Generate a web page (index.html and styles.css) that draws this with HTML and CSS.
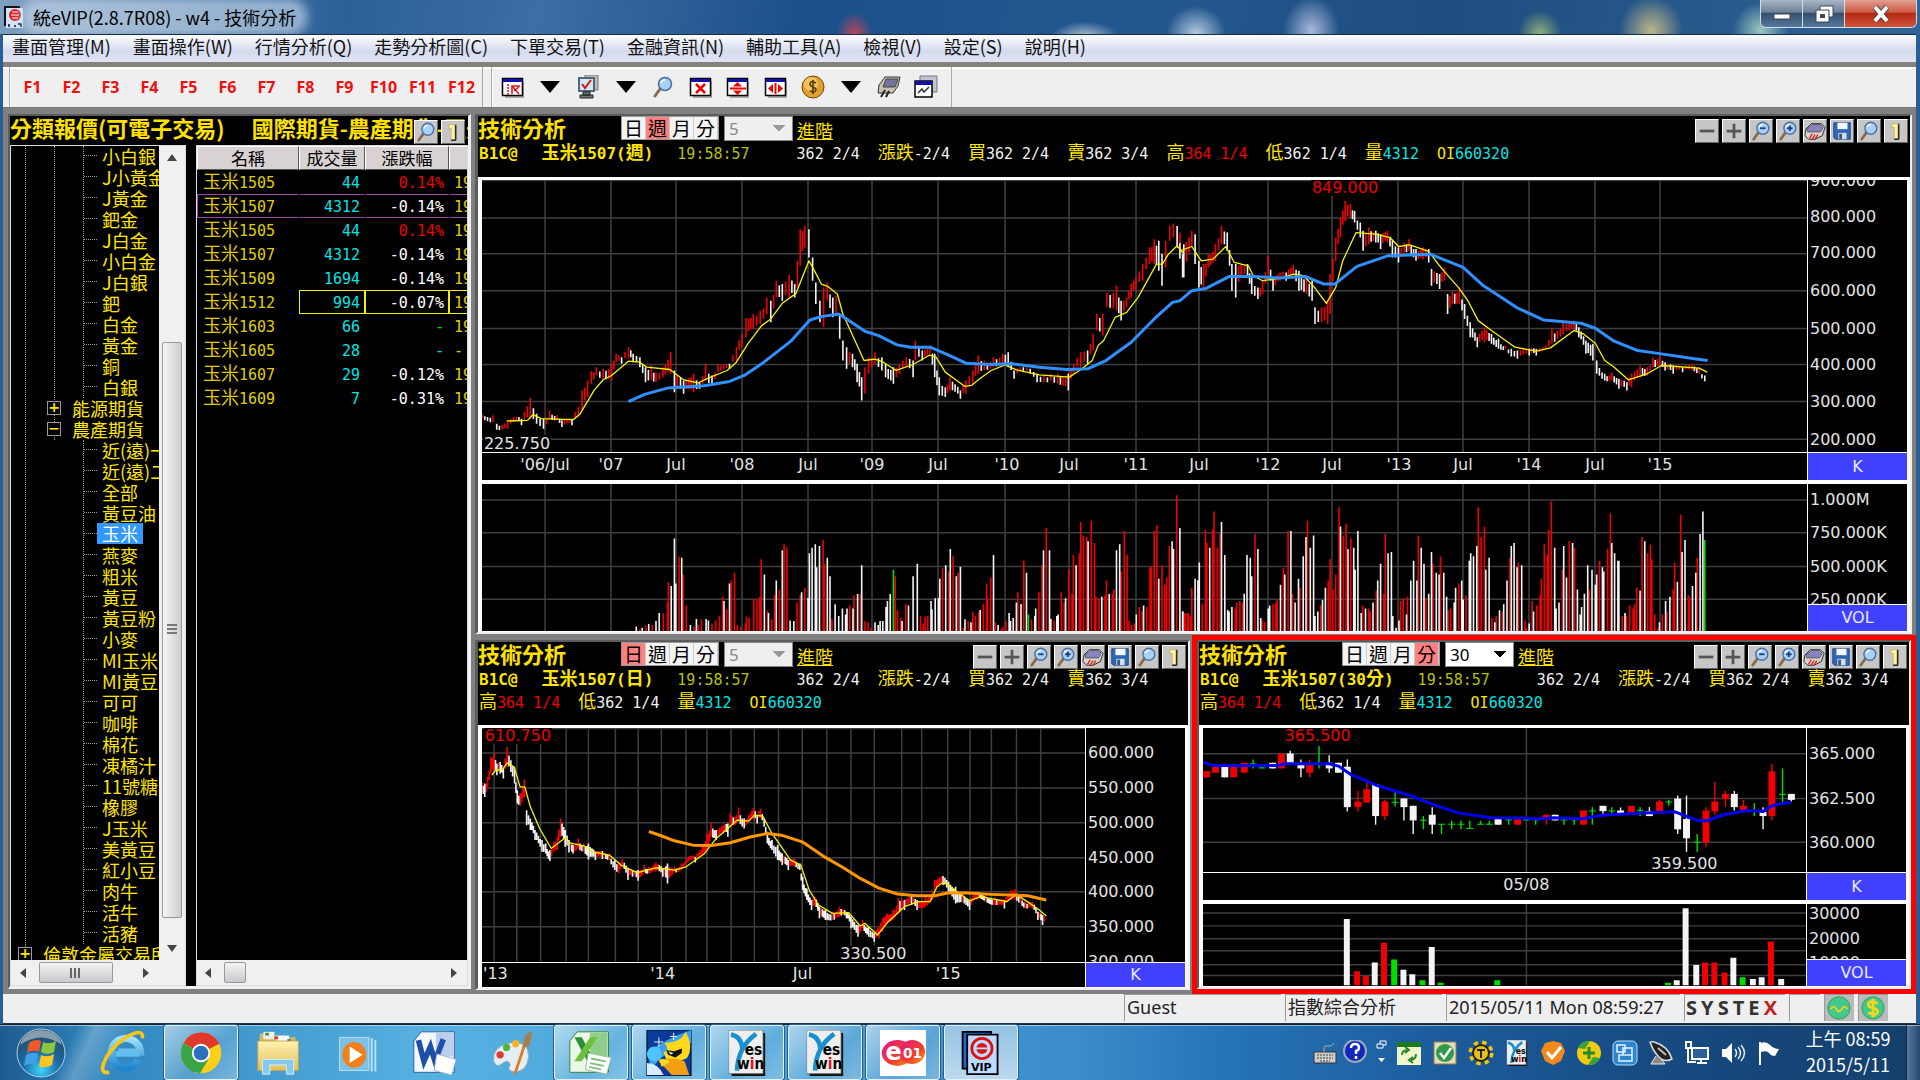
FILE: index.html
```html
<!DOCTYPE html>
<html lang="zh-Hant">
<head>
<meta charset="utf-8">
<title>統eVIP(2.8.7R08) - w4 - 技術分析</title>
<link rel="stylesheet" href="styles.css">
</head>
<body>
<svg class="defs" aria-hidden="true">
  <defs>
    <linearGradient id="gSky" x1="0" y1="0" x2="0" y2="1"><stop offset="0" stop-color="#9fe0fb"/><stop offset="1" stop-color="#1d86d0"/></linearGradient>
    <radialGradient id="gOrb" cx=".5" cy=".85" r=".8"><stop offset="0" stop-color="#3fd6ff"/><stop offset=".45" stop-color="#1b6ea8"/><stop offset="1" stop-color="#27475f"/></radialGradient>
    <linearGradient id="gFolder" x1="0" y1="0" x2="0" y2="1"><stop offset="0" stop-color="#fff2b0"/><stop offset="1" stop-color="#e2bf5a"/></linearGradient>
    <linearGradient id="gEo" x1="0" y1="0" x2="1" y2="1"><stop offset="0" stop-color="#e6148c"/><stop offset=".6" stop-color="#f0402a"/><stop offset="1" stop-color="#f8a01c"/></linearGradient>
    <symbol id="lens" viewBox="0 0 24 24"><path d="M9 14 4 21" stroke="#8a6a4a" stroke-width="3" stroke-linecap="round"/><circle cx="14" cy="9" r="6.500" fill="#a9d0f5" stroke="#4a6fa5" stroke-width="1.500"/><path d="M10 8a4 4 0 0 1 4-3" stroke="#fff" stroke-width="1.500" fill="none"/></symbol>
    <symbol id="lensMinus" viewBox="0 0 24 24"><use href="#lens"/><path d="M11 9h6" stroke="#1d3f80" stroke-width="2"/></symbol>
    <symbol id="lensPlus" viewBox="0 0 24 24"><use href="#lens"/><path d="M11 9h6M14 6v6" stroke="#1d3f80" stroke-width="2"/></symbol>
    <symbol id="minus" viewBox="0 0 24 24"><path d="M4 12h16" stroke="#555" stroke-width="3"/></symbol>
    <symbol id="plus" viewBox="0 0 24 24"><path d="M4 12h16M12 4v16" stroke="#555" stroke-width="3"/></symbol>
    <symbol id="printer" viewBox="0 0 24 24"><path d="M8 4h11l4 4-3 9-8 4H5l-4-4 1-7z" fill="#d8d4c8" stroke="#222"/><path d="M9 5h9l3 3-3 5H4l-1-3z" fill="#8884c0" stroke="#444" stroke-width=".8"/><path d="M6 20l3-5M9 21l3-5M12 21l3-5" stroke="#e02020" stroke-width="1.500"/></symbol>
    <symbol id="disk" viewBox="0 0 24 24"><path d="M3 3h18v18H5l-2-2z" fill="#2f67b5" stroke="#1b4686"/><path d="M7 3h11v7H7z" fill="#f4f7fb"/><path d="M8 14h9v7H8z" fill="#d5dce6"/><path d="M9 15h3v6H9z" fill="#37557f"/></symbol>
    <symbol id="one" viewBox="0 0 24 24"><path d="M8 4h6v17h-4V8H7z" fill="#fff3a0" stroke="#b09a40" stroke-width=".6"/><path d="M15 4v17M10 21h5" stroke="#222" stroke-width="1.500"/></symbol>
    <symbol id="winFrame" viewBox="0 0 24 24"><path d="M4 6h19v17H4z" fill="#aaa"/><path d="M1.500 3.500h20v17h-20z" fill="#fff" stroke="#000" stroke-width="1.500"/><path d="M2 4h19v3H2z" fill="#1010b0"/></symbol>
    <symbol id="yeswin" viewBox="0 0 48 60"><path d="M4 4h44v56H4z" fill="#111"/><path d="M0 0h45v57H0z" fill="#eee" stroke="#555"/><path d="M3 6q13 2 15 18M36 5Q12 22 11 53" stroke="#1791cf" stroke-width="6" fill="none"/></symbol>
    <symbol id="start" viewBox="0 0 50 50"><circle cx="25" cy="25" r="24" fill="url(#gOrb)" stroke="#a9d4ec"/><path d="M13 15q6-5 12-2l-2 11q-6-3-12 1z" fill="#ef5a24"/><path d="M27 14q6 3 13-1l-2 11q-7 4-13 0z" fill="#8cc63e"/><path d="M10 27q6-4 12-1l-2 11q-6-3-12 1z" fill="#3f9fe8"/><path d="M25 27q6 3 13-1l-2 11q-7 4-13 1z" fill="#fcc525"/><path d="M4 17Q25 2 46 17 42 3 25 2 8 3 4 17z" fill="#fff" opacity=".45"/></symbol>
    <symbol id="ie" viewBox="0 0 50 50"><path d="M42 33a16 16 0 1 1 2-9H20" fill="none" stroke="url(#gSky)" stroke-width="8"/><path d="M17 26h26" stroke="#5fc0f0" stroke-width="6"/><path d="M10 46Q0 48 4 36 10 20 28 8 48-3 46 9" fill="none" stroke="#f5c51c" stroke-width="4"/></symbol>
    <symbol id="chrome" viewBox="0 0 50 50"><circle cx="25" cy="25" r="22" fill="#fdd017"/><path d="M25 25 6 14A22 22 0 0 1 45 15z" fill="#e0392b"/><path d="M25 25 6 14A22 22 0 0 0 24 47l9-15z" fill="#3ba449"/><circle cx="25" cy="25" r="10" fill="#fff"/><circle cx="25" cy="25" r="8" fill="#2f6fc0"/></symbol>
    <symbol id="folder" viewBox="0 0 50 50"><path d="M4 4h16l3 4h20v36H4z" fill="#d9b75a"/><path d="M8 2h12v8H8z" fill="#eee"/><path d="M22 6h14v8H22z" fill="#f7f7f7"/><path d="M10 3h4v3h-4z" fill="#2c9a4a"/><path d="M20 7h4v3h-4z" fill="#d63c2a"/><path d="M34 10h4v3h-4z" fill="#2f6fc0"/><path d="M2 12h44v32H2z" fill="url(#gFolder)" stroke="#c9a54a"/><path d="M7 48V32h34v16h-8V38H15v10z" fill="#86c9ee" stroke="#d9f2ff"/></symbol>
    <symbol id="media" viewBox="0 0 50 50"><path d="M6 8h32v36H6z" fill="#7cc1ea" stroke="#bfe4f8"/><path d="M41 9v36M45 11v34" stroke="#bfe4f8" stroke-width="2"/><ellipse cx="22" cy="27" rx="13" ry="14" fill="#f07f1c"/><path d="m17 18 14 9-14 9z" fill="#fff"/></symbol>
    <symbol id="word" viewBox="0 0 50 50"><path d="M10 2h36v44H2V12z" fill="#f4f8ff" stroke="#2b579a"/><path d="M26 3h19v26H26z" fill="#bcd0ee"/><path d="m7 11 6 23 7-16 5 16 9-24" fill="none" stroke="#1c4fa8" stroke-width="6"/><path d="m27 26 21 6-5 17-19-5z" fill="#fff" stroke="#9bb4dc"/></symbol>
    <symbol id="paint" viewBox="0 0 50 50"><path d="M4 34Q2 18 22 14q20-3 20 15-2 18-18 16-6-2-2-7-2-7-8-2-7 6-10-2z" fill="#e6eef5" stroke="#9ab"/><circle cx="11" cy="27" r="4" fill="#e03b2b"/><circle cx="18" cy="19" r="4" fill="#56b23c"/><circle cx="28" cy="15" r="4" fill="#f5b324"/><path d="m27 48 10-30" stroke="#e07a20" stroke-width="3"/><path d="m35 19 4-14 7-4-3 16z" fill="#b07a4a"/></symbol>
    <symbol id="excel" viewBox="0 0 50 50"><path d="M10 2h34v44H2V12z" fill="#eaf6e6" stroke="#2f7d32"/><path d="M24 3h19v26H24z" fill="#8fcf8a"/><path d="M7 8h8l14 26h-8z" fill="#2f8f3a"/><path d="M24 8h8L15 34H7z" fill="#6fbf3f"/><path d="m22 25 25 5-5 18-23-5z" fill="#fff" stroke="#8bbf8b"/><path d="m25 31 16 3M24 36l15 3M23 40l13 3" stroke="#7fbf7f" stroke-width="2"/></symbol>
    <symbol id="hero" viewBox="0 0 50 50"><path d="M1 0h48v50H1z" fill="#0a3a9a" stroke="#000"/><path d="M1 25Q20 10 49 0v14Q20 22 6 42z" fill="#3aa0f0"/><path d="M20 14Q38 14 43 2q9 16 2 28-8 6-23 2l-3-8q8-2 1-10z" fill="#ffd91a"/><path d="m22 22 9 1 8-3v5l-7 5-8-3z" fill="#111"/><path d="m24 23 6 2-3 2z" fill="#ddd"/><path d="M14 34q16-6 28 0l5 15H28z" fill="#f0a010"/><circle cx="9" cy="26" r="8" fill="#4fc4ff"/><path d="M14 32q8-2 12 3l-9 5z" fill="#ffd91a"/><path d="M1 36q12 0 18 13H1z" fill="#d9ecff"/><path d="M14 8v10M9 13h10M30 3v8M26 7h8" stroke="#fff"/></symbol>
    <symbol id="eo" viewBox="0 0 50 50"><path d="M0 0h50v50H0z" fill="#fff"/><ellipse cx="19" cy="25" rx="17" ry="14" fill="url(#gEo)"/><ellipse cx="35" cy="24" rx="14" ry="13" fill="url(#gEo)"/></symbol>
    <symbol id="vip" viewBox="0 0 50 50"><path d="M5 2h31v40H5z" fill="#1e6ad0" stroke="#000" stroke-width="2"/><path d="M10 5h33v43H10z" fill="#b9dcff" stroke="#000" stroke-width="2"/><circle cx="26" cy="20" r="11" fill="none" stroke="#e01010" stroke-width="3"/><circle cx="26" cy="20" r="6" fill="#e01010"/><path d="M19 20h14" stroke="#b9dcff" stroke-width="2"/></symbol>
  </defs>
</svg>

<header class="titlebar">
  <svg class="appicon" viewBox="0 0 20 22"><path d="M0 0h16v20H0z" fill="#111"/><path d="M2 2h17v20H2z" fill="#cfe4fa"/><circle cx="11" cy="9" r="6" fill="#e02020"/><path d="M7 9h8M8 6h6M8 12h6" stroke="#fff" stroke-width="1"/><path d="M5 18v3M11 19v2M14 18h3v3" stroke="#111" stroke-width="1.500" fill="none"/></svg>
  <h1>統eVIP(2.8.7R08) - w4 - 技術分析</h1>
  <div class="winbtns">
    <button aria-label="最小化"><svg width="22" height="16"><path d="M3 8h16v5H3z" fill="#fff" stroke="#445"/></svg></button>
    <button aria-label="還原"><svg width="22" height="18"><path d="M7 1h13v11H7z" fill="#fff" stroke="#445"/><path d="M3 5h13v12H3z" fill="#fff" stroke="#445"/><path d="M7 9h5v4H7z" fill="#445"/></svg></button>
    <button class="close" aria-label="關閉"><svg width="22" height="18"><path d="m5 2 12 14M17 2 5 16" stroke="#544" stroke-width="6"/><path d="m5 2 12 14M17 2 5 16" stroke="#fff" stroke-width="4"/></svg></button>
  </div>
</header>

<div class="window">
  <nav class="menubar">
    <button>畫面管理(M)</button><button>畫面操作(W)</button><button>行情分析(Q)</button><button>走勢分析圖(C)</button><button>下單交易(T)</button><button>金融資訊(N)</button><button>輔助工具(A)</button><button>檢視(V)</button><button>設定(S)</button><button>說明(H)</button>
  </nav>
  <div class="toolbars">
    <div class="toolbar keys">
      <button>F1</button><button>F2</button><button>F3</button><button>F4</button><button>F5</button><button>F6</button><button>F7</button><button>F8</button><button>F9</button><button>F10</button><button>F11</button><button>F12</button>
    </div>
    <div class="toolbar icons">
      <button aria-label="版面"><svg viewBox="0 0 24 24"><use href="#winFrame"/><path d="M7 9v11" stroke="#e01010" stroke-width="1.500" stroke-dasharray="2 1"/><path d="M11 19V11h8M12 12l6 7M13 16l5-4" stroke="#e01010" stroke-width="1.500" fill="none"/></svg></button>
      <button aria-label="版面選單"><svg viewBox="0 0 24 24"><path d="M2 6h20L12 18z"/></svg></button>
      <button aria-label="連線"><svg viewBox="0 0 24 24"><path d="M9 0h13v15H9z" fill="#bbb" stroke="#777"/><path d="M3 3h15v13H3z" fill="#c8ecf8" stroke="#567" stroke-width="2"/><path d="m6 9 3 4 6-8" stroke="#e01010" stroke-width="2" fill="none"/><path d="M7 17h7v3H7zM4 20h13v3H4z" fill="#777" stroke="#222"/></svg></button>
      <button aria-label="連線選單"><svg viewBox="0 0 24 24"><path d="M2 6h20L12 18z"/></svg></button>
      <button aria-label="搜尋"><svg viewBox="0 0 24 24"><use href="#lens"/></svg></button>
      <button aria-label="關閉視窗"><svg viewBox="0 0 24 24"><use href="#winFrame"/><path d="m7 9 9 9M16 9l-9 9" stroke="#f00000" stroke-width="2.500"/></svg></button>
      <button aria-label="水平分割"><svg viewBox="0 0 24 24"><use href="#winFrame"/><path d="M4 13.500h16" stroke="#f00000" stroke-width="2"/><path d="M7 11.500h9L11.500 7zM7 15.500h9L11.500 20z" fill="#f00000"/></svg></button>
      <button aria-label="垂直分割"><svg viewBox="0 0 24 24"><use href="#winFrame"/><path d="M11.500 8v11" stroke="#f00000" stroke-width="2"/><path d="M9 9v9l-5-4.500zM14 9v9l5-4.500z" fill="#f00000"/></svg></button>
      <button aria-label="下單"><svg viewBox="0 0 24 24"><circle cx="12" cy="12" r="11" fill="#e0a030" stroke="#6a4510"/><circle cx="10" cy="9" r="7" fill="#f6d070" opacity=".7"/><path d="M15 8q-6-3-6 1 0 2 3 3t3 3q-1 3-6 1M12 5v14" stroke="#5a3a08" stroke-width="1.600" fill="none"/></svg></button>
      <button aria-label="下單選單"><svg viewBox="0 0 24 24"><path d="M2 6h20L12 18z"/></svg></button>
      <button aria-label="列印"><svg viewBox="0 0 24 24"><path d="M8 2h15l-2 9-5 7H1l1-8z" fill="#c8c2b0" stroke="#333"/><path d="M9 4h12l-3 8H6z" fill="#7773a0" stroke="#444"/><path d="m4 22 4-7M9 22l3-6" stroke="#222" stroke-width="2"/></svg></button>
      <button aria-label="走勢"><svg viewBox="0 0 24 24"><path d="M6 1h17v16H6z" fill="#c4c4cc" stroke="#778"/><path d="M1 6h17v16H1z" fill="#fff" stroke="#000" stroke-width="1.500"/><path d="M1 6h17v4H1z" fill="#1010a0"/><path d="m4 18 4-4 2 3 5-5" stroke="#333" stroke-width="1.500" fill="none"/></svg></button>
    </div>
  </div>

  <main class="workspace">
    <section class="panel quotes">
      <header class="quotehead">
        <h2>分類報價(可電子交易)&ensp;&ensp;&nbsp;國際期貨-農產期貨-玉米</h2>
        <div class="tools"><button aria-label="查詢"><svg><use href="#lens"/></svg></button><button aria-label="群組一"><svg><use href="#one"/></svg></button></div>
      </header>
      <div class="quotebody">
        <div class="treebox">
          <div class="treeview">
            <div class="branch root">
              <div class="branch">
                <ul class="branch"><li>小白銀</li><li>J小黃金</li><li>J黃金</li><li>鈀金</li><li>J白金</li><li>小白金</li><li>J白銀</li><li>鈀</li><li>白金</li><li>黃金</li><li>銅</li><li>白銀</li></ul>
                <p><button aria-label="展開">+</button>能源期貨</p>
                <p><button aria-label="收合">−</button>農產期貨</p>
              </div>
              <ul class="branch deep"><li>近(遠)一</li><li>近(遠)二</li><li>全部</li><li>黃豆油</li><li class="sel"><span>玉米</span></li><li>燕麥</li><li>粗米</li><li>黃豆</li><li>黃豆粉</li><li>小麥</li><li>MI玉米</li><li>MI黃豆</li><li>可可</li><li>咖啡</li><li>棉花</li><li>凍橘汁</li><li>11號糖</li><li>橡膠</li><li>J玉米</li><li>美黃豆</li><li>紅小豆</li><li>肉牛</li><li>活牛</li><li>活豬</li></ul>
              <p><button aria-label="展開">+</button>倫敦金屬交易所</p>
            </div>
          </div>
          <div class="vbar"><i class="up"></i><b></b><i class="down"></i></div>
          <div class="hbar"><i class="left"></i><b></b><i class="right"></i></div>
        </div>
        <div class="listbox">
          <div class="listview">
          <table>
            <thead><tr><th class="c1">名稱</th><th class="c2">成交量</th><th class="c3">漲跌幅</th><th class="c4"></th></tr></thead>
            <tbody>
              <tr><td>玉米<b>1505</b></td><td><b>44</b></td><td class="up"><b>0.14%</b></td><td><b>19</b></td></tr>
              <tr class="cur"><td>玉米<b>1507</b></td><td><b>4312</b></td><td><b>-0.14%</b></td><td><b>19</b></td></tr>
              <tr><td>玉米<b>1505</b></td><td><b>44</b></td><td class="up"><b>0.14%</b></td><td><b>19</b></td></tr>
              <tr><td>玉米<b>1507</b></td><td><b>4312</b></td><td><b>-0.14%</b></td><td><b>19</b></td></tr>
              <tr><td>玉米<b>1509</b></td><td><b>1694</b></td><td><b>-0.14%</b></td><td><b>19</b></td></tr>
              <tr class="flash"><td>玉米<b>1512</b></td><td><b>994</b></td><td><b>-0.07%</b></td><td><b>19</b></td></tr>
              <tr><td>玉米<b>1603</b></td><td><b>66</b></td><td class="flat"><b>-</b></td><td><b>19</b></td></tr>
              <tr><td>玉米<b>1605</b></td><td><b>28</b></td><td class="none"><b>-</b></td><td><b>-</b></td></tr>
              <tr><td>玉米<b>1607</b></td><td><b>29</b></td><td><b>-0.12%</b></td><td><b>19</b></td></tr>
              <tr><td>玉米<b>1609</b></td><td><b>7</b></td><td><b>-0.31%</b></td><td><b>19</b></td></tr>
            </tbody>
          </table>
          </div>
          <div class="hbar small"><i class="left"></i><b></b><i class="right"></i></div>
        </div>
      </div>
    </section>

    <div class="charts">
      <section class="panel tech week">
        <header class="techhead">
          <div class="row"><h2>技術分析</h2>
            <div class="period"><button>日</button><button class="on">週</button><button>月</button><button>分</button></div>
            <select disabled aria-label="分鐘"><option>5</option></select><a href="#adv">進階</a>
            <div class="tools"><button aria-label="縮"><svg><use href="#minus"/></svg></button><button aria-label="放"><svg><use href="#plus"/></svg></button><button aria-label="縮小"><svg><use href="#lensMinus"/></svg></button><button aria-label="放大"><svg><use href="#lensPlus"/></svg></button><button aria-label="列印"><svg><use href="#printer"/></svg></button><button aria-label="儲存"><svg><use href="#disk"/></svg></button><button aria-label="查詢"><svg><use href="#lens"/></svg></button><button aria-label="群組一"><svg><use href="#one"/></svg></button></div>
          </div>
          <p class="info"><strong><b>B1C@</b></strong><strong>玉米<b>1507(</b>週<b>)</b></strong><span class="time"><b>19:58:57</b></span><span><b class="w">362 2/4</b></span><span>漲跌<b class="w">-2/4</b></span><span>買<b class="w">362 2/4</b></span><span>賣<b class="w">362 3/4</b></span><span>高<b class="r">364 1/4</b></span><span>低<b class="w">362 1/4</b></span><span>量<b class="c">4312</b></span><span><b>OI</b><b class="c">660320</b></span></p>
        </header>
        <div class="plots">
          <div class="price"><svg class="plot" id="weekK"></svg><svg class="scale" id="weekKs"></svg><svg class="dates" id="weekD"></svg><button class="tag">K</button></div>
          <div class="vol"><svg class="plot" id="weekV"></svg><div class="side"><svg class="scale" id="weekVs"></svg><button class="tag">VOL</button></div></div>
        </div>
      </section>

      <section class="panel tech day">
        <header class="techhead">
          <div class="row"><h2>技術分析</h2>
            <div class="period"><button class="on">日</button><button>週</button><button>月</button><button>分</button></div>
            <select disabled aria-label="分鐘"><option>5</option></select><a href="#adv">進階</a>
            <div class="tools"><button aria-label="縮"><svg><use href="#minus"/></svg></button><button aria-label="放"><svg><use href="#plus"/></svg></button><button aria-label="縮小"><svg><use href="#lensMinus"/></svg></button><button aria-label="放大"><svg><use href="#lensPlus"/></svg></button><button aria-label="列印"><svg><use href="#printer"/></svg></button><button aria-label="儲存"><svg><use href="#disk"/></svg></button><button aria-label="查詢"><svg><use href="#lens"/></svg></button><button aria-label="群組一"><svg><use href="#one"/></svg></button></div>
          </div>
          <p class="info"><strong><b>B1C@</b></strong><strong>玉米<b>1507(</b>日<b>)</b></strong><span class="time"><b>19:58:57</b></span><span><b class="w">362 2/4</b></span><span>漲跌<b class="w">-2/4</b></span><span>買<b class="w">362 2/4</b></span><span>賣<b class="w">362 3/4</b></span></p>
          <p class="info"><span>高<b class="r">364 1/4</b></span><span>低<b class="w">362 1/4</b></span><span>量<b class="c">4312</b></span><span><b>OI</b><b class="c">660320</b></span></p>
        </header>
        <div class="plots">
          <div class="price"><svg class="plot" id="dayK"></svg><svg class="scale" id="dayKs"></svg><svg class="dates" id="dayD"></svg><button class="tag">K</button></div>
        </div>
      </section>

      <div class="active">
      <section class="panel tech minute">
        <header class="techhead">
          <div class="row"><h2>技術分析</h2>
            <div class="period"><button>日</button><button>週</button><button>月</button><button class="on">分</button></div>
            <select aria-label="分鐘"><option>30</option></select><a href="#adv">進階</a>
            <div class="tools"><button aria-label="縮"><svg><use href="#minus"/></svg></button><button aria-label="放"><svg><use href="#plus"/></svg></button><button aria-label="縮小"><svg><use href="#lensMinus"/></svg></button><button aria-label="放大"><svg><use href="#lensPlus"/></svg></button><button aria-label="列印"><svg><use href="#printer"/></svg></button><button aria-label="儲存"><svg><use href="#disk"/></svg></button><button aria-label="查詢"><svg><use href="#lens"/></svg></button><button aria-label="群組一"><svg><use href="#one"/></svg></button></div>
          </div>
          <p class="info"><strong><b>B1C@</b></strong><strong>玉米<b>1507(30</b>分<b>)</b></strong><span class="time"><b>19:58:57</b></span><span><b class="w">362 2/4</b></span><span>漲跌<b class="w">-2/4</b></span><span>買<b class="w">362 2/4</b></span><span>賣<b class="w">362 3/4</b></span></p>
          <p class="info"><span>高<b class="r">364 1/4</b></span><span>低<b class="w">362 1/4</b></span><span>量<b class="c">4312</b></span><span><b>OI</b><b class="c">660320</b></span></p>
        </header>
        <div class="plots">
          <div class="price"><svg class="plot" id="minK"></svg><svg class="scale" id="minKs"></svg><svg class="dates" id="minD"></svg><button class="tag">K</button></div>
          <div class="vol"><svg class="plot" id="minV"></svg><div class="side"><svg class="scale" id="minVs"></svg><button class="tag">VOL</button></div></div>
        </div>
      </section>
      </div>
    </div>
  </main>

  <footer class="status">
    <span class="user">Guest</span><span class="page">指數綜合分析</span><span class="clock">2015/05/11 Mon 08:59:27</span><span class="brand"><i>S</i><i>Y</i><i>S</i><i>T</i><i>E</i><em>X</em></span><span class="blank"></span>
    <span class="lamp"><svg viewBox="0 0 28 28"><circle cx="14" cy="14" r="12" fill="#45c98a" stroke="#2c9a62"/><path d="M5 15q3-5 6 0t6 0 6 0" stroke="#f0d020" stroke-width="2" fill="none"/></svg></span>
    <span class="lamp"><svg viewBox="0 0 28 28"><circle cx="14" cy="14" r="12" fill="#45c98a" stroke="#2c9a62"/><path d="M19 9q-9-4-10 1 0 3 5 4t5 4q-1 5-10 1M14 4v20" stroke="#f4d81c" stroke-width="3" fill="none"/></svg></span>
  </footer>
</div>

<nav class="taskbar">
  <button class="orb" aria-label="開始"><svg><use href="#start"/></svg></button>
  <button aria-label="Internet Explorer"><svg><use href="#ie"/></svg></button>
  <button class="run" aria-label="Chrome"><svg><use href="#chrome"/></svg></button>
  <button aria-label="檔案總管"><svg><use href="#folder"/></svg></button>
  <button aria-label="媒體播放器"><svg><use href="#media"/></svg></button>
  <button aria-label="Word"><svg><use href="#word"/></svg></button>
  <button aria-label="小畫家"><svg><use href="#paint"/></svg></button>
  <button class="run" aria-label="Excel"><svg><use href="#excel"/></svg></button>
  <button class="run" aria-label="超人"><svg><use href="#hero"/></svg></button>
  <button class="run" aria-label="Yeswin"><svg viewBox="0 0 48 60"><use href="#yeswin"/><text x="21" y="33" class="yw">es</text><text x="11" y="51" class="yw">w<tspan class="rd">i</tspan>n</text></svg></button>
  <button class="run" aria-label="Yeswin"><svg viewBox="0 0 48 60"><use href="#yeswin"/><text x="21" y="33" class="yw">es</text><text x="11" y="51" class="yw">w<tspan class="rd">i</tspan>n</text></svg></button>
  <button class="run" aria-label="e01"><svg viewBox="0 0 50 50"><use href="#eo"/><text x="6" y="33" class="eo big">e</text><text x="25" y="30" class="eo">01</text></svg></button>
  <button class="run front" aria-label="VIP"><svg viewBox="0 0 50 50"><use href="#vip"/><text x="14" y="45" class="vp">VIP</text></svg></button>
  <div class="tray">
    <svg viewBox="0 0 26 26"><path d="M2 12h22v11H2z" fill="#ccc" stroke="#333"/><path d="M5 15h16M5 18h16M8 21h10" stroke="#444" stroke-dasharray="2 1"/><path d="M12 12V8q0-3 4-2t6-3" stroke="#aaa" fill="none"/></svg>
    <svg viewBox="0 0 26 26"><circle cx="13" cy="11" r="11" fill="#1226c0" stroke="#9ab" stroke-width="2"/><path d="M9 8q0-4 4-4t4 4q0 2-3 3v3M14 16v3" stroke="#fff" stroke-width="2.500" fill="none"/></svg>
    <svg class="thin" viewBox="0 0 14 26"><path d="M3 4h6v4H3zM6 4V1h6v4H9" stroke="#fff" fill="none"/><path d="M4 18h7l-3.500 4z" fill="#fff"/></svg>
    <svg viewBox="0 0 26 26"><path d="M1 2h24v23H1z" fill="#f0f4c8"/><path d="M1 2h24v5H1z" fill="#1d7a1d"/><path d="M6 15q0-5 6-5M9 7l4 3-4 3M20 14q0 6-6 6M17 23l-4-3 4-3" stroke="#2a8a2a" stroke-width="2" fill="none"/></svg>
    <svg viewBox="0 0 26 26"><path d="M2 2h22v22H2z" fill="#e4dcb8" stroke="#8a8058"/><circle cx="13" cy="13" r="9" fill="#2e9a4a"/><path d="m8 13 4 5 7-10" stroke="#fff" stroke-width="2.500" fill="none"/></svg>
    <svg viewBox="0 0 26 26"><circle cx="13" cy="13" r="10" fill="none" stroke="#f0c810" stroke-width="5" stroke-dasharray="4 4"/><circle cx="13" cy="13" r="8" fill="#e8c010" stroke="#222" stroke-width="2"/><path d="M9 10h8M13 10v8" stroke="#222" stroke-width="2"/></svg>
    <svg viewBox="0 0 48 60"><use href="#yeswin"/><text x="21" y="33" class="yw">es</text><text x="11" y="51" class="yw">w<tspan class="rd">i</tspan>n</text></svg>
    <svg viewBox="0 0 26 26"><path d="m5 3 8-2 8 2 4 8-4 10-8 4-8-4-4-10z" fill="#f08a1c"/><path d="m7 12 5 6 9-11" stroke="#fff" stroke-width="3" fill="none"/></svg>
    <svg viewBox="0 0 26 26"><circle cx="13" cy="13" r="12" fill="#f0cc10"/><path d="M2 8a12 12 0 0 1 12-7L9 9zM24 18a12 12 0 0 1-12 7l5-8z" fill="#3aa03a"/><path d="M13 7v12M7 13h12" stroke="#1f8a2a" stroke-width="3"/></svg>
    <svg viewBox="0 0 26 26"><rect x="1" y="1" width="24" height="24" rx="5" fill="#2a86d0" stroke="#b8dcf4"/><path d="M5 5h8v7H5zM11 8h9v7h-9zM7 15h13v6H7z" fill="none" stroke="#e8f4ff" stroke-width="1.500"/></svg>
    <svg viewBox="0 0 26 26"><path d="M3 4Q0 1 6 2q14 4 18 17-8 4-14-3T3 4z" fill="#222" stroke="#ddd" stroke-width="1.500"/><path d="m8 16-5 8h14l-4-5" fill="#888" stroke="#eee"/><path d="m10 8 8 7" stroke="#bbb" stroke-width="2"/></svg>
    <svg viewBox="0 0 26 26"><path d="M8 8h16v11H8z" fill="#2a5f98" stroke="#fff" stroke-width="2"/><path d="M13 23h10M17 19v4M2 2h5v6H2zM4 8v14h8" stroke="#fff" stroke-width="2" fill="none"/></svg>
    <svg viewBox="0 0 26 26"><path d="M2 9h4l6-6v20l-6-6H2z" fill="#fff"/><path d="M15 9q3 4 0 8M18 7q5 6 0 12M21 5q7 8 0 16" stroke="#dfe9f4" stroke-width="1.500" fill="none"/></svg>
    <svg viewBox="0 0 26 26"><path d="M4 2v23" stroke="#fff" stroke-width="2"/><path d="M5 3q5-2 9 2t9 4l-4 7q-4 0-6-3t-8-1z" fill="#fff"/></svg>
    <time>上午 08:59<br>2015/5/11</time>
    <button class="peek" aria-label="顯示桌面"></button>
  </div>
</nav>
<script src="charts.js"></script>
</body>
</html>
```

FILE: styles.css
```css
* { box-sizing: border-box; }
html, body { height: 100%; margin: 0; }
body {
  display: flex; flex-direction: column; min-height: 700px; overflow: hidden;
  font-family: "Noto Sans", "Noto Sans CJK TC", sans-serif; font-size: 18px; color: #111;
  background: #2a5d94;
}
button { font: inherit; color: inherit; border: 0; padding: 0; margin: 0; background: none; }
h1, h2, p, ul { margin: 0; padding: 0; font-weight: normal; }
.defs { position: absolute; width: 0; height: 0; }

/* title bar */
.titlebar {
  flex: none; height: 34px; display: flex; align-items: center; padding-left: 4px;
  background:
    radial-gradient(18px 22px at 44.500% 100%, #b6485c 0, transparent 100%),
    radial-gradient(34px 16px at 56.500% 110%, #b9c4d2 0, transparent 100%),
    radial-gradient(30px 28px at 62.300% 100%, #b5cbe0 0, transparent 100%),
    radial-gradient(28px 34px at 68.300% 90%, #aab9dc 0, transparent 100%),
    radial-gradient(22px 24px at 80.200% 100%, #8fae7a 0, transparent 100%),
    radial-gradient(32px 34px at 86% 90%, #bdb58a 0, transparent 100%),
    radial-gradient(28px 28px at 91.700% 90%, #9cc7c0 0, transparent 100%),
    linear-gradient(100deg, #7f9fc0 0, #2a5f98 18%, #3d6ea4 28%, #1b4f8b 42%, #23588f 60%, #1e4c7e 75%, #2f6496 100%);
}
.appicon { width: 20px; height: 22px; }
.titlebar h1 {
  font-size: 18px; line-height: 26px; margin-left: 3px; padding: 0 6px; color: #000;
  font-family: "Noto Sans CJK TC", sans-serif; border-radius: 15px;
  background: rgba(205, 220, 236, .6); box-shadow: 0 0 10px 6px rgba(205, 220, 236, .6);
}
.winbtns { margin: 0 3px 0 auto; display: flex; align-self: flex-start; height: 28px; border: 1px solid #cfdcea; border-top: 0; border-radius: 0 0 6px 6px; overflow: hidden; }
.winbtns button { width: 42px; display: grid; place-items: center; background: linear-gradient(#a8b6c6, #6d8198 45%, #34506e 50%, #55789c); border-right: 1px solid #cfdcea; }
.winbtns .close { width: 71px; border: 0; background: linear-gradient(#e0a090, #cf5a44 45%, #b52a12 50%, #d0543a); }

.window { flex: 1; min-height: 0; display: flex; flex-direction: column; margin: 0 4px 0 3px; border-top: 1px solid #1c2c40; background: #efefef; }

/* menu and toolbars */
.menubar { flex: none; display: flex; gap: 22px; height: 27px; padding-left: 9px; background: linear-gradient(#fbfcfe, #dfe4f2 45%, #d4d9ed 60%, #e0e5f4); font-family: "Noto Sans CJK TC", sans-serif; }
.menubar button { line-height: 20px; white-space: nowrap; height: 22px; }
.toolbars { flex: none; display: flex; height: 46px; border-top: 5px solid #85817d; border-bottom: 1px solid #777; box-shadow: inset 0 2px #fff; }
.toolbar { display: flex; align-items: center; border-left: 1px solid #aaa; border-right: 1px solid #aaa; box-shadow: inset 1px 0 #fff; }
.keys { margin-left: 6px; padding-left: 3px; width: 474px; color: #f01010; font: bold 16px "Noto Sans", sans-serif; }
.keys button { width: 39px; height: 30px; text-align: center; }
.icons { margin-left: 8px; padding: 0 6px 0 2px; width: 461px; }
.icons button { flex: 1; display: grid; place-items: center; }
.icons svg { width: 24px; height: 24px; }

/* workspace */
.workspace { flex: 1; min-height: 0; display: flex; gap: 4px; padding: 6px 0 0 5px; background: #808080; }
.panel { background: #000; border: 2px solid; border-color: #5c5c5c #f0f0f0 #f0f0f0 #5c5c5c; color: #ffe600; }
.panel h2 { font: bold 22px/22px "Noto Sans CJK TC", sans-serif; white-space: nowrap; color: #ffe100; }
.panel b { font: normal 15px "DejaVu Sans Mono", monospace; }
.tools { display: flex; gap: 3px; }
.tools button { width: 24px; height: 24px; background: #c6c6c6; border: 1px solid; border-color: #fff #666 #666 #fff; display: grid; place-items: center; }
.tools svg { width: 22px; height: 22px; }

/* quotes panel */
.quotes { width: 463px; margin-bottom: 5px; display: flex; flex-direction: column; border-right-width: 3px; border-bottom-width: 3px; font-family: "Noto Sans CJK TC", sans-serif; }
.quotehead { display: flex; height: 29px; overflow: hidden; position: relative; }
.quotehead .tools { position: absolute; right: 3px; top: 4px; }
.quotebody { flex: 1; min-height: 0; display: flex; gap: 10px; }
.treebox, .listbox { border: 1px solid #ddd; min-height: 0; }
.treebox { width: 176px; display: grid; grid-template: minmax(0, 1fr) 25px / 148px minmax(0, 1fr); }
.treeview { overflow: hidden; }
.vbar { display: flex; flex-direction: column; align-items: center; background: #f0f0f0; padding: 8px 0; }
.vbar b { margin-top: 195px; flex: 1; width: 20px; margin-bottom: 27px; border: 1px solid #999; border-radius: 2px; background: repeating-linear-gradient(#777 0 2px, transparent 2px 4px) center/10px 12px no-repeat, linear-gradient(90deg, #f6f6f6, #cdcdd2); }
i.up, i.down, i.left, i.right { width: 0; height: 0; border: 5px solid transparent; }
i.up { border-bottom: 7px solid #444; border-top: 0; margin-bottom: -14px; }
i.down { border-top: 7px solid #444; border-bottom: 0; }
i.left { border-right: 6px solid #444; border-left: 0; }
i.right { border-left: 6px solid #444; border-right: 0; margin-left: auto; }
.hbar { display: flex; align-items: center; grid-column: 1 / -1; height: 25px; background: #f0f0f0; padding: 0 36px 0 9px; }
.hbar b { width: 74px; height: 21px; margin-left: 13px; border: 1px solid #999; border-radius: 2px; background: repeating-linear-gradient(90deg, #666 0 2px, transparent 2px 4px) center/12px 10px no-repeat, linear-gradient(#f4f4f4, #c9c9ce); }
.hbar.small { padding: 0 10px 0 8px; }
.hbar.small b { width: 22px; background: linear-gradient(#f4f4f4, #c9c9ce); }

.branch { margin-left: 28px; border-left: 1px dotted #999; list-style: none; white-space: nowrap; }
.branch.root { margin-left: 14px; }
.branch.deep { margin-left: 57px; }
.branch li, .branch p { height: 21px; line-height: 20px; display: flex; align-items: center; padding-bottom: 2px; }
.branch li::before { content: ""; width: 13px; margin-right: 5px; border-top: 1px dotted #999; flex: none; }
.branch p button { width: 14px; height: 14px; margin: 0 11px 0 -8px; border: 1px solid #999; background: #000; color: #ffe600; font: bold 14px/11px "DejaVu Sans", sans-serif; flex: none; }
.branch .sel span { background: #3399ff; color: #fff; padding: 0 5px; margin-left: -5px; height: 21px; }

.listbox { flex: 1; display: flex; flex-direction: column; min-width: 0; }
.listview { flex: 1; overflow: hidden; }
table { table-layout: fixed; border-collapse: separate; border-spacing: 0; width: 284px; white-space: nowrap; }
th { height: 24px; padding: 0; background: #d9d2d2; color: #000; font-weight: normal; font-size: 17px; line-height: 20px; border: 1px solid; border-color: #fff #555 #555 #fff; }
.c1 { width: 102px; } .c2 { width: 66px; } .c3 { width: 84px; }
td { height: 24px; padding: 0 4px 2px 5px; line-height: 16px; border: 1px solid transparent; text-align: right; color: #fff; }
td b { line-height: 16px; }
.listview td b { line-height: 16px; }
td:nth-child(1) { text-align: left; color: #e0cf00; }
td:nth-child(2), td.none { color: #00e5e5; }
td:nth-child(4) { text-align: left; color: #e0cf00; padding-left: 4px; }
td.up { color: #f00000; } td.flat { color: #00e000; }
.cur td { border-color: #a040a8 transparent; }
.cur td:first-child { border-left-color: #a040a8; }
.flash td:not(:first-child) { border-color: #f0f000; }

/* chart panels */
.charts { flex: 1; min-width: 0; display: grid; grid-template: minmax(0, 521fr) minmax(0, 359fr) / minmax(0, 715fr) minmax(0, 724fr); gap: 1px 2px; }
.tech { display: flex; flex-direction: column; border-left-width: 3px; min-height: 0; }
.week { grid-column: 1 / -1; margin-right: 4px; }
.day { margin: 5px 0 4px; }
.active { border: 5px solid #f00; display: flex; min-height: 0; }
.minute { flex: 1; border-left-width: 2px; }
.techhead { flex: none; height: 61px; overflow: hidden; }
.day .techhead, .minute .techhead { height: 83px; }
.row { display: flex; height: 25px; }
.row h2 { width: 143px; }
.period { display: flex; height: 24px; border: 1px solid #999; }
.period button { width: 24px; background: #f4f4f4; color: #000; line-height: 18px; font-size: 19px; font-family: "Noto Sans CJK TC", sans-serif; border-right: 1px solid #ccc; }
.period .on { background: #ff8080; }
select { appearance: none; width: 69px; height: 25px; margin: 0 4px 0 5px; padding: 0 4px; border: 1px solid #888; border-radius: 0; font: 17px "Noto Sans", sans-serif; color: #000; opacity: 1;
  background: linear-gradient(to bottom right, #000 50%, #0000 0) right 7px center/6px 7px no-repeat, linear-gradient(to bottom left, #000 50%, #0000 0) right 13px center/6px 7px no-repeat, #fff; }
select:disabled { color: #888; background: linear-gradient(to bottom right, #999 50%, #0000 0) right 7px center/6px 7px no-repeat, linear-gradient(to bottom left, #999 50%, #0000 0) right 13px center/6px 7px no-repeat, #efefef; }
.row a { color: #ffe100; font: 18px/28px "Noto Sans CJK TC", sans-serif; height: 28px; }
.row .tools { margin: 3px 2px 0 auto; }
.info { display: flex; gap: 18px; height: 23px; line-height: 20px; white-space: nowrap; font-family: "Noto Sans CJK TC", sans-serif; padding-left: 1px; }
.info .time { color: #b8c000; margin-right: 29px; }
.info strong { margin-right: 6px; }
.info strong b { font-size: 16px; font-weight: bold; }
.info .w { color: #f2f2f2; } .info .r { color: #f00000; } .info .c { color: #00e5e5; }
.plots { flex: 1; min-height: 0; display: flex; flex-direction: column; gap: 4px; background: #fff; padding: 3px 3px 1px 4px; }
.price { flex: 302; min-height: 0; display: grid; grid-template: minmax(0, 1fr) 27px / minmax(0, 1fr) 99px; gap: 1px; }
.vol { flex: 148; min-height: 0; display: grid; grid-template: minmax(0, 1fr) / minmax(0, 1fr) 99px; gap: 1px; }
.minute .price { flex: 173; } .minute .vol { flex: 82; }
.day .price { grid-template-rows: minmax(0, 1fr) 24px; }
.side { display: flex; flex-direction: column; gap: 1px; min-height: 0; }
.side .scale { flex: 1; min-height: 0; }
.plots svg { display: block; width: 100%; height: 100%; background: #000; overflow: hidden; min-height: 0; }
.plots text { font: 16px "DejaVu Sans", sans-serif; fill: #e4e4e4; dominant-baseline: central; }
.plots text.mid { text-anchor: middle; }
.plots text.hi { fill: #f00000; }
.tag { background: #4040ff; color: #e8e8ff; font: 16px/22px "DejaVu Sans", sans-serif; }
.side .tag { flex: none; height: 26px; }

/* status bar */
.status { flex: none; height: 30px; display: flex; justify-content: flex-end; gap: 4px; padding-right: 28px; border-bottom: 1px solid #234; color: #222; }
.status span { height: 27px; line-height: 25px; padding-left: 2px; border-left: 1px solid #999; border-top: 1px solid #999; white-space: nowrap; font-family: "Noto Sans", "Noto Sans CJK TC", sans-serif; }
.user { width: 157px; } .page { width: 157px; } .clock { width: 234px; }
.status .brand { width: 101px; display: flex; justify-content: space-between; font: bold 20px/25px "Open Sans", sans-serif; padding: 0 8px 0 1px; color: #333; }
.brand i { font-style: normal; }
.brand em { color: #c02020; font-style: normal; }
.blank { width: 31px; }
.status .lamp { width: 30px; padding: 0; background: #bbb; }
.lamp svg { width: 28px; height: 26px; }

/* taskbar */
.taskbar {
  flex: none; height: 56px; display: flex; align-items: stretch; gap: 4px; border-top: 1px solid #123;
  background: linear-gradient(115deg, transparent 4%, rgba(255,255,255,.25) 5%, transparent 7%), linear-gradient(90deg, #1f5a90 0, #2f85bd 5%, #56b0e0 22%, #4aa2d8 40%, #3a8ccc 56%, #2673b8 64%, #1c5c9c 75%, #174b82 86%, #143f6c 100%);
  box-shadow: inset 0 1px rgba(255,255,255,.5);
}
.taskbar > button { width: 74px; display: grid; place-items: center; }
.taskbar > button svg { width: 46px; height: 46px; }
.taskbar > .orb { width: 82px; }
.taskbar > .orb svg { width: 50px; height: 50px; }
.taskbar .run { border: 1px solid #e2f2fc; border-radius: 3px; background: linear-gradient(135deg, rgba(255,255,255,.55), rgba(255,255,255,.12) 60%, rgba(255,255,255,.3)); box-shadow: 0 0 0 1px #2a5d8c; }
.taskbar .front { background: linear-gradient(rgba(255,255,255,.45), rgba(255,255,255,.65)); }
text.yw { font: bold 20px "DejaVu Sans Condensed", "DejaVu Sans", sans-serif; fill: #000; }
.rd { fill: #e01010; }
text.eo { font: bold 15px "DejaVu Sans", sans-serif; fill: #fff; }
text.big { font-size: 26px; }
text.vp { font: bold 12px "DejaVu Sans", sans-serif; fill: #000; }
.tray { margin-left: auto; display: flex; align-items: center; gap: 10px; color: #fff; }
.tray svg { width: 26px; height: 26px; }
.tray svg.thin { width: 14px; margin: 0 -2px 0 -4px; }
.tray svg:first-child { margin-right: -6px; }
.tray time { font: 18px/26px "Noto Sans CJK TC", sans-serif; text-align: center; width: 92px; margin: 0 4px 0 10px; white-space: nowrap; align-self: flex-start; }
.peek { width: 14px; align-self: stretch; border-left: 1px solid #0c2a4a; background: linear-gradient(90deg, rgba(255,255,255,.3), rgba(255,255,255,.05)); margin-left: -2px; }
```

FILE: charts.js
```js
const NS = 'http://www.w3.org/2000/svg';
const COLORS = { r: '#f00000', w: '#f4f4f4', g: '#00e000' };

function add(parent, tag, attrs, text) {
  const node = document.createElementNS(NS, tag);
  for (const k in attrs) node.setAttribute(k, attrs[k]);
  if (text) node.textContent = text;
  parent.appendChild(node);
  return node;
}

// Stretchable drawing layer of w x h units inside a plot
function layer(id, w, h) {
  return add(document.getElementById(id), 'svg', { viewBox: `0 0 ${w} ${h}`, preserveAspectRatio: 'none', width: '100%', height: '100%' });
}

// Parse "x,y x,y" rows and map them to plot units
function parse(str, ox, sx, oy, dx = 0) {
  return str.trim().split(/\s+/).map(t => {
    const [x, ...ys] = t.split(',').map(Number);
    return [(x - ox) / sx + dx, ...ys.map(y => (y - oy) / 3)];
  });
}

function grid(g, w, h, xs, ys) {
  const d = xs.map(x => `M${x} 0V${h}`).join('') + ys.map(y => `M0 ${y}H${w}`).join('');
  add(g, 'path', { d, stroke: '#3f3f3f', 'stroke-width': 1.5, fill: 'none' });
}

function line(g, pts, color, width) {
  add(g, 'polyline', { points: pts.map(p => p.slice(0, 2).join()).join(' '), fill: 'none', stroke: color, 'stroke-width': width, 'stroke-linejoin': 'round' });
}

// High-low bars interpolated between range points
function ranges(g, pts, step, width) {
  const paths = { r: '', w: '' };
  let prev = null, n = 0;
  for (let i = 0; i < pts.length - 1; i++) {
    const [x0, h0, l0] = pts[i], [x1, h1, l1] = pts[i + 1];
    const count = Math.max(1, Math.round((x1 - x0) / step));
    for (let k = 0; k < count; k++) {
      const t = k / count, s = Math.sin(++n * 12.9) * 2;
      const len = (l0 + (l1 - l0) * t) - (h0 + (h1 - h0) * t);
      const cut = k ? len * .15 : 0;
      const top = h0 + (h1 - h0) * t + cut + (k ? s : 0);
      const bottom = l0 + (l1 - l0) * t - cut + (k ? s : 0);
      const mid = (top + bottom) / 2;
      const c = prev === null || mid < prev + .3 ? 'r' : 'w';
      paths[c] += `M${(x0 + (x1 - x0) * t).toFixed(1)} ${top.toFixed(1)}V${bottom.toFixed(1)}`;
      prev = mid;
    }
  }
  for (const c in paths) add(g, 'path', { d: paths[c], stroke: COLORS[c], 'stroke-width': width, fill: 'none' });
}

// "x,y" tokens ending in a colour letter
function bars(g, str, ox, sx, oy, dx, h, width) {
  const paths = { r: '', w: '', g: '' };
  str.trim().split(/\s+/).forEach(t => {
    const [[x, y]] = parse(t.slice(0, -1), ox, sx, oy, dx);
    paths[t.slice(-1)] += `M${x.toFixed(1)} ${h}V${y.toFixed(1)}`;
  });
  for (const c in paths) add(g, 'path', { d: paths[c], stroke: COLORS[c], 'stroke-width': width, fill: 'none' });
}

function scale(id, h, list) {
  list.forEach(([y, t]) => add(document.getElementById(id), 'text', { x: 2, y: y / h * 100 + '%' }, t));
}
function dates(id, w, list) {
  list.forEach(([x, t]) => add(document.getElementById(id), 'text', { x: x / w * 100 + '%', y: '42%', class: x < 20 ? '' : 'mid' }, t));
}
function note(id, w, h, x, y, t, cls = '') {
  const s = document.getElementById(id);
  const half = 34;
  const n = add(s, 'svg', { x: x / w * 100 + '%', y: y / h * 100 + '%', style: 'width:1px;height:1px;overflow:visible;background:none' });
  add(n, 'rect', { x: -half, y: -8, width: half * 2, height: 16, fill: '#000' });
  add(n, 'text', { x: 0, y: 0, class: 'mid ' + cls }, t);
}

/* Weekly chart */
const W = 1325, H = 273;
const weekX = [63, 129, 194, 260, 326, 390, 456, 523, 587, 654, 717, 786, 850, 916, 981, 1047, 1113, 1178];
let g = layer('weekK', W, H);
grid(g, W, H, weekX, [.5, 38, 74, 111, 149, 185, 222, 260]);
ranges(g, [
  ...parse(`26,940,955 50,945,965 58,970,988 82,965,985 95,950,965 112,955,975 131,893,955 145,940,970 160,955,985 173,930,955 190,945,960 200,960,980 222,955,975 236,920,950 244,870,930 256,840,890 264,812,850 275,800,825 290,805,835 308,790,840 318,760,785 330,770,790 345,740,775 355,760,785 370,770,800 382,800,845 395,795,840 405,815,845 420,800,830 437,755,820 445,810,875 465,840,880 487,820,875 500,845,865 513,790,840 527,825,855 540,790,815 565,790,805 580,740,780 592,700,740 601,652,710 617,640,685 632,630,670 646,590,640 655,600,665 667,540,590 680,550,600 695,523,590 707,550,590 713,480,560 719,385,495 729,375,440 738,385,470 746,470,540 753,545,610 762,600,665 770,560,680 778,545,600 790,590,650 797,585,640 805,640,715 812,720,780 820,740,805 833,760,800 843,790,845 853,830,900 860,800,880 868,770,820 882,755,790 897,770,810 905,790,830 922,800,850 935,790,820 950,770,800 965,780,830 970,720,780 985,750,780 1002,735,760 1012,760,830 1022,830,885 1035,860,890 1045,830,870 1068,870,895 1080,840,880 1095,810,850 1107,765,820 1120,780,810 1140,770,800 1160,760,790 1172,755,800 1185,810,835 1205,800,815 1220,805,820 1235,820,845 1250,825,845 1265,820,840 1280,820,850 1303,820,870 1315,790,820 1330,755,800 1345,750,790 1357,700,750 1365,640,690 1378,640,705 1387,575,620 1408,555,630 1418,600,660 1430,590,620 1440,550,590 1450,530,570 1465,490,540 1480,440,490 1490,415,490 1500,420,510 1507,460,555 1515,420,500 1524,375,420 1532,368,410 1540,375,440 1552,460,530 1560,430,480`, 26, 2.178, 237),
  ...parse(`0,395,460 8,430,530 25,390,440 32,400,490 40,480,560 50,490,560 60,460,500 75,430,480 88,375,430 100,395,450 110,490,570 118,490,590 130,490,530 143,490,530 152,530,580 165,560,595 175,540,580 187,465,520 197,530,570 212,515,540 225,515,540 240,492,530 252,510,570 268,530,580 280,540,600 286,620,670 300,620,665 313,600,670 318,520,640 330,410,480 340,350,410 350,300,360 361,308,350 370,330,365 382,365,410 388,390,450 400,380,430 415,390,425 425,400,445 440,390,425 450,420,470 463,440,485 475,425,455 485,415,450 500,445,480 515,440,475 527,445,485 533,505,555 550,520,565 560,500,540 567,580,640 577,570,610 592,560,610 603,610,655 615,665,710 630,710,740 645,680,725 660,700,730 675,715,745 690,735,745 702,745,768 715,750,775 740,745,765 755,745,765 775,735,745 788,685,730 800,690,715 812,660,700 825,665,690 835,660,690 845,680,710 860,720,760 875,730,780 883,780,820 900,820,840 915,815,840 930,835,865 947,845,870 957,820,860 975,795,830 990,800,825 1002,770,800 1017,765,795 1028,785,810 1045,795,820 1065,800,815 1085,790,810 1100,800,820 1112,825,842 1118,830,838`, 0, 2.119, 237, 698)
], 2.8, 1.6);
line(g, [
  ...parse(`80,962 125,960 137,943 155,955 225,958 240,940 270,870 290,838 308,825 345,782 370,785 385,800 435,807 465,838 497,847 520,832 560,810 580,785 605,730 635,675 655,655 680,608 710,578 738,480 752,515 765,550 780,558 800,580 812,640 858,780 882,776 900,785 928,810 965,792 1000,764 1015,770 1035,815 1060,840 1078,858 1092,855 1110,835 1135,810 1165,793 1190,808 1240,823 1305,830 1330,808 1355,780 1368,735 1380,720 1405,650 1430,635 1455,590 1495,490 1508,490 1520,462 1540,435 1552,455`, 26, 2.178, 237),
  ...parse(`0,450 25,437 45,480 70,475 97,437 115,485 145,495 155,525 175,540 215,532 240,520 262,525 285,560 310,608 330,560 345,480 373,395 415,400 445,410 463,437 487,432 527,452 550,495 565,520 590,560 610,600 632,660 660,690 710,740 755,752 785,742 835,690 855,700 880,728 900,780 920,800 950,838 990,820 1020,795 1100,803 1117,815`, 0, 2.119, 237, 698)
], '#f4f400', 1.3);
line(g, [
  ...parse(`345,904 380,882 430,863 510,856 565,843 597,825 640,785 700,720 740,658 765,648 803,640 825,660 860,692 890,705 930,733 960,740 1002,740 1040,762 1080,788 1130,792 1180,790 1240,800 1300,807 1345,805 1385,780 1440,725 1490,655 1530,605`, 26, 2.178, 237),
  ...parse(`0,600 25,570 55,563 105,527 155,527 210,532 265,527 305,550 328,550 375,497 440,465 530,460 600,500 640,552 715,622 770,658 850,668 880,683 920,722 970,750 1020,760 1090,775 1118,780`, 0, 2.119, 237, 698)
], '#2f90ff', 3);
note('weekK', W, H, 863, 8, '849.000', 'hi');
note('weekK', W, H, 35, 264, '225.750');
scale('weekKs', H, [[0, '900.000'], [37, '800.000'], [73, '700.000'], [111, '600.000'], [149, '500.000'], [185, '400.000'], [222, '300.000'], [260, '200.000']]);
dates('weekD', W, [[63, "'06/Jul"], [129, "'07"], [194, 'Jul'], [260, "'08"], [326, 'Jul'], [390, "'09"], [456, 'Jul'], [525, "'10"], [587, 'Jul'], [654, "'11"], [717, 'Jul'], [786, "'12"], [850, 'Jul'], [917, "'13"], [981, 'Jul'], [1047, "'14"], [1113, 'Jul'], [1178, "'15"]]);

const VH = 148;
g = layer('weekV', W, VH);
grid(g, W, VH, weekX, [16, 49, 83, 116]);
bars(g, `362,472w 370,480r 375,476w 383,468r 389,464w 397,467r 405,455w 412,431w 421,432r 430,400r 432,338r 438,350w 445,206w 448,342w 455,262r 461,265w 464,315r 471,409r 480,467w 488,473r 493,449w 497,467r 504,450r 514,449w 519,454w 527,463r 535,454r 543,440r 550,382r 553,395w 559,420r 565,342w 569,333r 576,310r 582,467r 590,472r 600,462r 602,442r 608,446r 618,388r 625,392r 631,383r 634,269r 641,315w 648,424r 650,431w 657,450r 663,377r 667,333w 674,360r 680,242w 684,224r 690,233r 697,454w 705,455w 712,401r 719,378r 722,369w 729,355r 736,386w 739,251w 745,234w 752,224w 755,293w 761,229w 769,211r 772,283r 778,265w 784,320w 788,450r 795,405w 803,440w 811,418w 818,436w 821,418w 827,409r 834,418w 836,378r 844,374w 850,374r 853,287w 860,455r 867,459r 873,476r 882,459w 889,467w 893,455w 899,455w 906,413w 909,395w 915,374w 922,301g 926,320r 931,423r 938,446r 941,455w 949,404r 955,409w 965,320w 974,283w 981,440r 987,462r 991,441r 997,440r 1004,395w 1006,420w 1013,387w 1020,386w 1023,328w 1029,296r 1036,287w 1043,305r 1046,238w 1052,260r 1059,320w 1063,310r 1068,292w 1075,476r 1078,450w 1085,455r 1091,459w 1095,427r 1101,440r 1108,426r 1111,422w 1118,405r 1125,342r 1127,387r 1134,324r 1140,256w 1144,459r 1150,467w 1157,479r 1161,472r 1167,455r 1174,431w 1177,455w 1183,446w 1190,400w 1193,369r 1200,404w 1206,274r 1212,310w 1216,436g 1223,450r 1230,440w 1232,418w 1239,369r 1246,287r 1249,242w 1255,175r 1262,242w 1265,449w 1272,454r 1278,440w 1281,436w 1288,369r 1294,400r 1297,387w 1304,300r 1311,374r 1314,256r 1320,287w 1327,251r 1330,157r 1336,197r 1343,202r 1346,215w 1353,153r 1360,220r 1363,382r 1370,387r 1376,382w 1383,377r 1386,333r 1392,374w 1399,374r 1402,360r 1408,242w 1415,224w 1418,305r 1425,184r 1431,256r 1435,454r 1441,467r 1447,462r 1451,436w 1458,413r 1464,427r 1467,409w 1474,413r 1481,293r 1484,293r 1490,184r 1496,166r 1500,328w 1507,287r 1513,346r 1517,324r 1523,229r 1529,215w 1532,238w 1539,76r 1546,175w 1552,427w 1558,432r 1564,432r`, 26, 2.178, 42, 0, VH, 1.6);
bars(g, `6,427w 10,432r 16,432r 22,440r 25,355r 32,328w 38,332w 41,279w 47,405r 54,180r 57,220r 63,234w 69,180r 72,125r 79,234r 85,192r 88,157w 95,256w 101,422w 104,427w 110,413w 117,418r 120,400r 127,395r 133,400r 136,373w 142,256w 149,265w 152,320w 159,193r 165,238w 171,446w 174,454r 180,459r 187,418w 190,409w 197,405r 203,400r 206,392r 213,346w 219,296r 222,315w 229,184r 235,184w 238,373r 244,400w 251,328w 254,355r 261,260w 267,202w 270,153r 276,234w 283,197w 286,440w 292,427w 298,408r 302,392w 308,355w 314,333r 318,269r 324,360r 330,315r 337,112r 340,170w 346,197r 352,162r 356,238w 362,206r 368,234w 371,301w 377,184w 384,431w 387,409r 393,418w 400,418r 403,427r 409,400w 416,364r 419,333w 425,283w 432,373r 435,192r 441,251w 448,247w 451,440w 458,476w 464,454w 467,395r 473,387r 480,436w 482,382r 489,333w 495,274w 502,333w 505,197r 511,234w 517,283w 521,387r 527,373w 533,247w 536,283r 543,310w 549,315w 552,261r 559,310w 565,382w 568,422r 574,418r 581,400w 584,355w 591,342r 597,333w 600,391w 606,378r 613,274w 616,251w 622,260w 629,229w 632,112r 638,202r 645,171r 648,301w 655,265w 661,446r 667,459w 670,441r 677,423w 683,427r 686,405w 693,333w 699,265r 702,229w 708,220w 714,293w 717,279r 724,287w 731,454r 734,476r 740,463w 746,395r 749,427w 756,409r 763,378r 766,328r 772,224r 778,256r 781,180r 787,94r 794,234w 797,418w 803,400w 810,301r 813,229w 819,324w 825,215r 832,220w 836,234r 842,360w 848,436w 851,413w 857,373w 864,287w 867,360r 873,301w 880,346w 883,315w 889,274r 895,293w 898,306w 906,238r 912,130r 915,220w 921,251w 928,274w 930,274w 937,440r 943,431w 946,440r 953,409r 960,418r 963,405r 968,355r 975,364w 979,202r 985,215w 991,251r 997,225r 1000,269r 1006,436r 1013,476r 1016,459w 1022,436r 1029,395w 1032,427r 1038,382w 1045,360r 1048,279r 1054,337w 1061,135r 1064,247w 1070,211w 1077,378r 1080,387r 1086,350w 1093,310w 1096,265r 1102,193w 1108,125w 1112,211g`, 0, 2.119, 42, 698, VH, 1.6);
scale('weekVs', 121, [[16, '1.000M'], [49, '750.000K'], [83, '500.000K'], [116, '250.000K']]);

/* Daily chart */
const DW = 604, DH = 234;
g = layer('dayK', DW, DH);
grid(g, DW, DH, [52, 101, 152, 207, 255, 313, 362, 412, 465, 510, 562, 612, 664, 715, 768, 820, 870, 929, 972, 1028, 1076, 1122, 1176, 1228].map(x => (x - 26) / 2.148), [.5, 25, 60, 95, 130, 164, 199]);
ranges(g, parse(`26,275,305 32,280,320 38,260,290 45,200,250 52,187,240 58,220,255 65,215,250 72,235,265 80,170,230 88,210,245 96,230,280 102,300,340 108,310,347 117,268,320 122,360,405 130,385,420 140,420,450 155,450,485 163,460,490 172,480,513 180,455,485 188,440,480 195,385,440 205,420,470 213,450,487 222,465,490 233,445,475 245,460,485 255,460,508 270,485,510 285,483,507 300,490,510 312,510,540 320,515,550 328,507,530 340,535,570 350,540,560 362,540,572 375,525,545 385,530,550 400,517,545 415,535,560 425,520,580 440,530,545 455,520,540 470,500,515 485,500,517 500,470,495 510,430,480 519,398,440 530,420,450 545,405,430 555,400,440 560,370,410 570,380,405 578,352,395 590,385,415 600,375,395 610,353,390 618,375,400 625,355,385 633,385,410 640,425,460 650,450,480 662,465,510 672,490,525 685,510,540 698,505,530 710,520,540 716,560,600 725,595,630 735,630,660 742,620,650 752,650,685 765,660,690 780,665,690 795,650,680 810,665,685 820,680,715 835,705,740 845,690,715 858,710,740 870,730,755 880,710,745 888,685,725 897,670,700 910,660,690 922,622,670 935,630,660 950,618,645 962,630,660 980,620,650 995,600,630 1000,570,600 1018,558,585 1030,575,610 1045,590,640 1060,605,635 1075,630,660 1090,605,630 1110,615,635 1130,622,645 1150,630,655 1165,600,630 1173,597,630 1185,615,640 1195,635,655 1210,635,655 1222,665,690 1232,675,705 1240,680,692`, 26, 2.148, 113), 1.6, 1.6);
line(g, parse(`47,255 55,240 70,238 80,218 95,230 108,290 118,290 130,350 150,415 175,475 205,443 215,458 245,467 265,485 300,495 325,525 360,548 400,533 440,540 465,530 505,490 530,445 575,390 600,393 612,375 630,378 650,430 690,510 712,525 730,600 750,645 780,670 815,668 840,708 850,700 877,735 900,695 935,650 965,635 990,635 1005,590 1020,575 1050,607 1075,632 1100,620 1155,635 1175,613 1205,640 1225,660 1240,678`, 26, 2.148, 113), '#f4f400', 1.3);
line(g, parse(`385,424 410,436 440,452 480,465 520,466 560,458 605,440 640,430 670,435 715,455 760,498 800,530 840,565 880,594 920,612 960,617 1000,617 1030,608 1070,609 1120,613 1200,617 1240,630`, 26, 2.148, 113), '#ff9600', 3);
note('dayK', DW, DH, 36, 8, '610.750', 'hi');
note('dayK', DW, DH, 392, 226, '330.500');
scale('dayKs', DH, [[25, '600.000'], [60, '550.000'], [95, '500.000'], [130, '450.000'], [164, '400.000'], [199, '350.000'], [234, '300.000']]);
dates('dayD', DW, [[1, "'13"], [181, "'14"], [321, 'Jul'], [467, "'15"]]);

/* 30-minute chart: x, high, low, body top, body bottom, colour */
const MW = 605, MH = 145;
g = layer('minK', MW, MH);
grid(g, MW, MH, [324.5], [26, 71, 115]);
`36,243,262,243,262,r 55,230,248,230,248,r 75,228,262,228,262,w 94,228,262,228,262,r 117,218,248,218,248,r 136,208,235,220,223,g 155,230,235,232,235,g 178,218,235,218,235,w 197,190,235,190,235,r 216,182,218,190,218,w 239,208,262,225,235,w 258,208,262,222,248,r 278,167,235,222,225,g 300,195,248,218,235,w 320,218,248,218,248,w 339,208,365,230,352,w 362,303,365,335,352,r 381,277,338,298,338,r 400,282,405,282,379,w 420,330,390,335,379,r 442,305,350,336,339,g 461,326,392,326,352,w 481,348,433,348,392,w 503,379,419,390,393,g 522,352,433,375,405,w 542,403,433,402,405,g 564,393,419,402,405,g 584,393,419,402,405,g 603,393,417,415,418,g 626,393,405,402,405,g 645,393,405,402,405,g 664,388,405,388,405,w 687,385,405,389,392,g 706,388,405,388,405,r 725,388,392,389,392,g 745,388,405,389,392,g 768,375,405,375,390,r 787,375,392,375,392,w 806,385,405,389,392,g 828,388,405,389,392,g 848,362,405,362,405,r 867,352,405,362,365,g 890,348,375,348,364,w 909,352,375,362,365,g 928,353,370,362,370,w 951,348,370,348,370,r 970,352,379,360,363,g 990,352,379,364,379,w 1012,330,365,335,365,r 1032,330,348,335,338,g 1051,317,433,326,419,w 1070,317,487,388,446,w 1093,433,487,456,459,g 1112,352,473,362,459,r 1131,276,375,335,365,r 1154,303,352,312,328,r 1173,303,362,312,352,w 1193,330,362,348,362,r 1216,340,379,361,364,g 1235,352,419,367,379,w 1254,222,392,244,379,r 1277,235,345,312,315,g 1296,312,335,312,330,w`
  .split(' ').forEach(t => {
    const c = COLORS[t.slice(-1)];
    const [[x, hi, lo, top, bottom]] = parse(t.slice(0, -2), 28, 2.148, 113);
    add(g, 'path', { d: `M${x} ${hi}V${lo}`, stroke: c, 'stroke-width': 1.4 });
    add(g, 'rect', { x: x - 3.5, y: top, width: 7, height: bottom - top, fill: c });
  });
line(g, parse(`28,216 50,226 190,226 205,221 300,221 320,228 345,252 400,285 480,320 530,347 580,370 650,384 720,385 750,388 785,384 845,387 890,376 980,370 1045,366 1095,393 1115,393 1150,375 1200,362 1235,365 1255,348 1277,340 1296,338`, 28, 2.148, 113), '#0000f0', 3);
note('minK', MW, MH, 115, 8, '365.500', 'hi');
note('minK', MW, MH, 483, 136, '359.500');
scale('minKs', MH, [[26, '365.000'], [71, '362.500'], [115, '360.000']]);
dates('minD', MW, [[324.5, '05/08']]);
g = layer('minV', MW, 82);
grid(g, MW, 82, [324.5], [9, 22, 35, 47, 61, 72]);
bars(g, `338,690w 360,848r 379,862r 398,821w 418,762r 440,812g 460,843w 479,857w 501,875g 521,775w 540,883g 662,875g 1030,883g 1049,875w 1068,658w 1091,829w 1110,821r 1130,821r 1152,852r 1171,807w 1191,866g 1213,871w 1232,866w 1252,758r 1274,871w`, 28, 2.148, 645, 0, 82, 6);
scale('minVs', 56, [[10, '30000'], [35, '20000'], [60, '10000']]);
```
